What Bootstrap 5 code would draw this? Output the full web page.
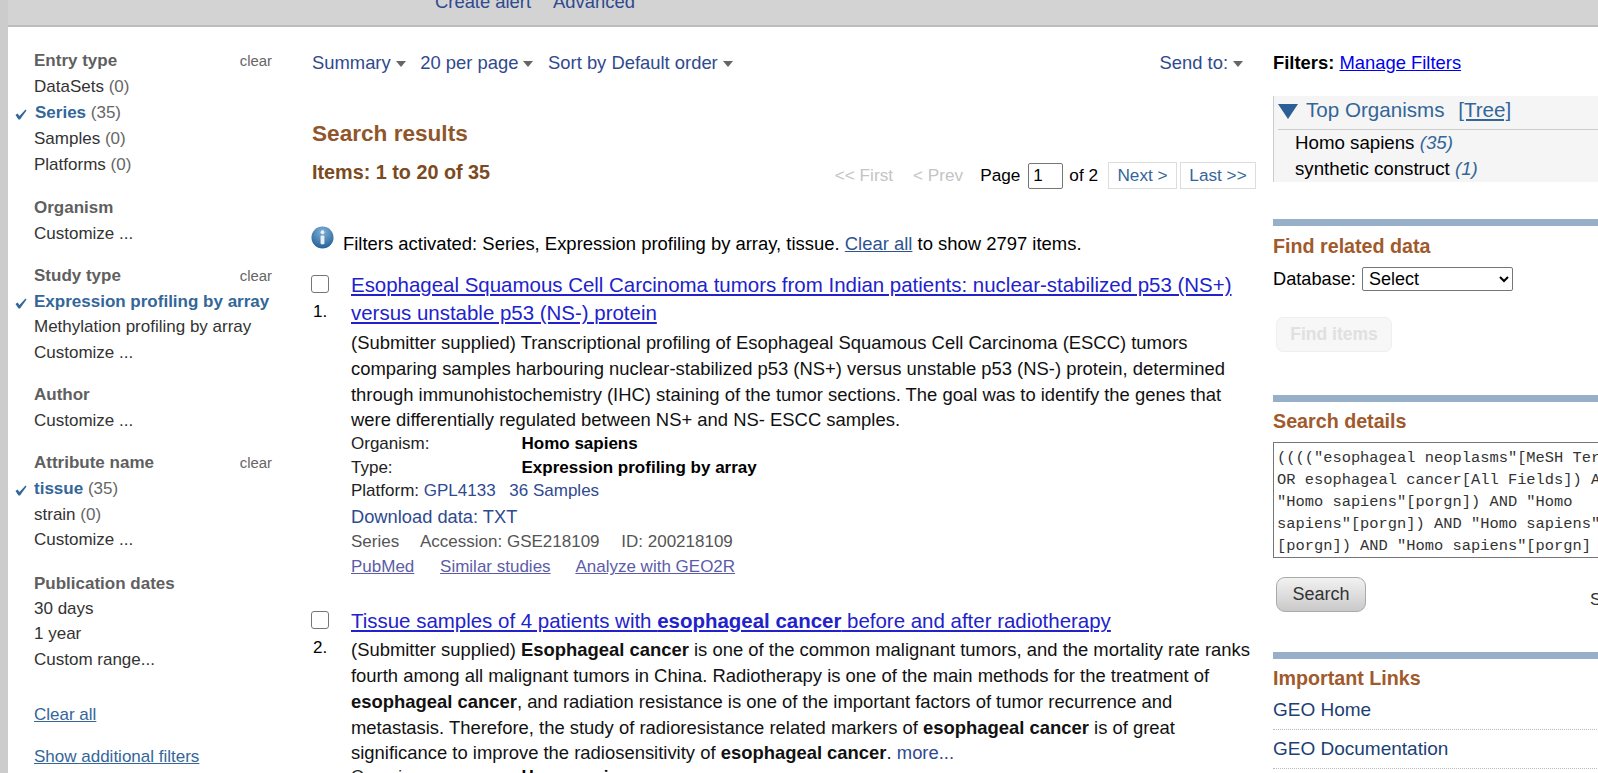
<!DOCTYPE html>
<html lang="en">
<head>
<meta charset="utf-8">
<title>GEO DataSets search results</title>
<link href="https://cdn.jsdelivr.net/npm/bootstrap@5.3.0/dist/css/bootstrap.min.css" rel="stylesheet">
<style>
html,body{height:773px;overflow:hidden;}
body{background:#ccc;font-family:"Liberation Sans",Arial,sans-serif;font-size:17px;color:#000;padding-left:8px;}
a{color:#2f4a8f;text-decoration:none;}
.top-strip{height:27px;background:#d3d3d3;border-bottom:2px solid #bdbdbd;overflow:hidden;}
.top-links{margin-left:427px;margin-top:-7px;gap:22px;font-size:18.4px;line-height:18px;}
.page-body{background:#fff;height:746px;width:1590px;overflow:hidden;}
.facets{width:296px;flex:none;padding:21px 0 0 26px;color:#333;font-size:17px;}
.facets-inner{width:238px;}
.facet-group{margin-bottom:17px;}
.facet-group-tall .facet-item{line-height:26px;}
.facet-group-mid .facet-item{line-height:25.7px;}
.facet-group-dates{margin-top:18px;margin-bottom:0;}
.facet-group-dates .facet-head{height:25px;}
.facet-head{color:#5f5f5f;font-weight:700;line-height:26px;height:26px;}
.facet-clear{font-weight:400;font-size:14.9px;color:#666;}
.facet-item{line-height:25.2px;position:relative;color:#333;}
.facet-item span{color:#666;}
.facet-item.on b{color:#336699;}
.facet-tick{position:absolute;left:-19px;top:9px;}
.facet-first{margin-left:1px;}
.facet-link{color:#336699;text-decoration:underline;line-height:26px;}
.facet-links-top{margin-top:30px;}
.center-col{width:945px;flex:none;padding-top:24px;margin-left:8px;}
.toolbar{font-size:18.4px;line-height:24px;color:#2f4a8f;}
.caret-mark{display:inline-block;border-left:5.5px solid transparent;border-right:5.5px solid transparent;border-top:6px solid #666;margin-left:5px;vertical-align:middle;}
.toolbar-left{gap:14.6px;}
.send-link{margin-right:14px;}
.results-title{color:#8f562b;font-size:22.6px;font-weight:700;line-height:26px;margin:0;padding-top:46px;}
.items-row{height:44px;align-items:flex-start;}
.items-count{color:#7b4a20;font-weight:700;font-size:19.8px;line-height:26px;margin-top:12px;}
.pager{font-size:17.2px;margin-top:15px;line-height:27px;height:27px;margin-right:1px;}
.pager-off{color:#c4c4c4;margin-right:20px;}
.pager-off-last{margin-right:17px;}
.pager-num{width:35px;height:26px;border:1px solid #767676;border-radius:2px;padding:0 4px;font-size:17px;margin:0 6px 0 8px;font-family:inherit;}
.pager-btn{border:1px solid #ddd;color:#336699;padding:0;text-align:center;height:27px;line-height:25px;margin-left:3px;}
.pager-next{margin-left:10px;width:69px;}
.pager-last{width:76px;}
.filter-note{margin-top:35px;height:45px;font-size:18.45px;line-height:20px;}
.filter-note a{text-decoration:underline;color:#2f5391;}
.filter-icon{flex:none;margin-left:-1px;margin-right:9px;}
.filter-text{margin-top:8px;}
.result-row{position:relative;padding-left:39px;}
.result-side{position:absolute;left:-1px;top:0;width:30px;}
.result-check{width:18px;height:18px;border:1px solid #767676;border-radius:3px;background:#fff;display:block;margin-top:4px;}
.result-num{display:block;font-size:17px;margin-top:9px;line-height:20px;padding-left:2px;}
.result-title{font-size:20.47px;line-height:28px;margin:0;}
.result-title a{color:#2222cc;text-decoration:underline;}
.result-desc{font-size:18.43px;line-height:25.8px;margin:3px 0 0;color:#111;}
.result-desc-tight{margin-top:2px;}
.result-desc a{color:#2f4a8f;}
.meta-first{margin-top:-1px;}
.meta-line{font-size:17px;line-height:24px;display:flex;}
.meta-key{width:170.5px;flex:none;color:#222;}
.meta-plat{font-size:17px;line-height:22px;color:#222;}
.meta-plat a{margin-right:9px;}
.meta-dl{font-size:18.3px;line-height:30px;display:block;margin-bottom:-2px;}
.meta-ids{font-size:17px;line-height:23px;color:#555;}
.meta-ids span{margin-right:17px;}
.meta-links{font-size:17px;line-height:25px;margin-top:1px;}
.meta-links a{color:#5c5ca8;text-decoration:underline;margin-right:21px;}
.result-gap{margin-top:28px;}
.side-col{flex:none;width:500px;padding-top:23px;margin-left:16px;}
.filters-line{font-size:18.4px;line-height:26px;}
.filters-line a{color:#0000ee;text-decoration:underline;}
.org-box{margin-top:20px;width:400px;background:#f5f5f5;border-left:1px solid #ccc;height:86px;padding-left:4px;}
.org-head{height:34px;border-bottom:1px solid #ccc;color:#336699;font-size:20.6px;line-height:28px;}
.org-head a{color:#336699;text-decoration:underline;margin-left:8px;}
.org-tri{margin-right:8px;vertical-align:-2px;}
.org-item{font-size:18.7px;line-height:26px;padding-left:17px;}
.org-item i{color:#336699;}
.sec-bar{height:7px;background:#97afc9;margin-top:37px;}
.sec-title{color:#a05a2c;font-size:19.7px;font-weight:700;line-height:26px;margin:7px 0 0;}
.db-line{font-size:18.2px;line-height:24px;margin-top:8px;}
.db-select{width:151px;height:24px;font-size:18px;border:1px solid #767676;border-radius:2px;background:#fff;padding:0 2px;font-family:inherit;margin-left:1px;}
.btn-find{display:block;margin:26px 0 43px 3px;height:35px;width:116px;font-size:17.5px;font-weight:700;color:#e0e0e0;background:#f7f7f7;border:1px solid #efefef;border-radius:7px;padding:0;}
.sec-bar-tight{margin-top:0;}
.sec-title-details{margin-top:6px;}
.query-box{display:block;width:400px;height:116px;margin-top:8px;font-family:"Liberation Mono",monospace;font-size:15.4px;line-height:22px;border:1px solid #767676;border-radius:0;padding:4px 0 0 3px;resize:none;overflow:hidden;white-space:pre;color:#333;}
.btn-search{display:block;width:90px;height:35px;border:1px solid #aaa;border-radius:9px;background:linear-gradient(#f2f2f2,#c9c9c9);color:#333;font-size:18px;padding:0;margin:0 0 0 3px;position:relative;top:19px;}
.search-row{position:relative;height:57px;}
.search-see{position:absolute;left:317px;top:33px;font-size:17px;line-height:18px;color:#333;}
.sec-title-links{margin-top:6px;}
.link-row{display:block;border-bottom:1px dotted #bbb;font-size:19px;line-height:38px;height:39px;color:#1c3f74;width:400px;}
</style>
</head>
<body>
<div class="top-strip"><div class="d-flex top-links"><a href="#">Create alert</a><a href="#">Advanced</a></div></div>
<div class="page-body d-flex">
  <aside class="facets">
    <div class="facets-inner">
      <div class="facet-group facet-group-tall">
        <div class="facet-head d-flex justify-content-between">Entry type <a href="#" class="facet-clear">clear</a></div>
        <div class="facet-item">DataSets <span>(0)</span></div>
        <div class="facet-item on"><svg class="facet-tick" width="12" height="11" viewBox="0 0 12 11"><path d="M0.5 6 L2.5 4.5 L4.5 7 L10.5 0.5 L11.5 1.5 L5 10.5 L3.5 10.5 Z" fill="#336699"/></svg><b class="facet-first">Series</b> <span>(35)</span></div>
        <div class="facet-item">Samples <span>(0)</span></div>
        <div class="facet-item">Platforms <span>(0)</span></div>
      </div>
      <div class="facet-group">
        <div class="facet-head">Organism</div>
        <div class="facet-item">Customize ...</div>
      </div>
      <div class="facet-group">
        <div class="facet-head d-flex justify-content-between">Study type <a href="#" class="facet-clear">clear</a></div>
        <div class="facet-item on"><svg class="facet-tick" width="12" height="11" viewBox="0 0 12 11"><path d="M0.5 6 L2.5 4.5 L4.5 7 L10.5 0.5 L11.5 1.5 L5 10.5 L3.5 10.5 Z" fill="#336699"/></svg><b>Expression profiling by array</b></div>
        <div class="facet-item">Methylation profiling by array</div>
        <div class="facet-item">Customize ...</div>
      </div>
      <div class="facet-group">
        <div class="facet-head">Author</div>
        <div class="facet-item">Customize ...</div>
      </div>
      <div class="facet-group facet-group-mid">
        <div class="facet-head d-flex justify-content-between">Attribute name <a href="#" class="facet-clear">clear</a></div>
        <div class="facet-item on"><svg class="facet-tick" width="12" height="11" viewBox="0 0 12 11"><path d="M0.5 6 L2.5 4.5 L4.5 7 L10.5 0.5 L11.5 1.5 L5 10.5 L3.5 10.5 Z" fill="#336699"/></svg><b>tissue</b> <span>(35)</span></div>
        <div class="facet-item">strain <span>(0)</span></div>
        <div class="facet-item">Customize ...</div>
      </div>
      <div class="facet-group facet-group-dates">
        <div class="facet-head">Publication dates</div>
        <div class="facet-item">30 days</div>
        <div class="facet-item">1 year</div>
        <div class="facet-item">Custom range...</div>
      </div>
      <div class="facet-links-top"><a href="#" class="facet-link">Clear all</a></div>
      <div class="mt-3"><a href="#" class="facet-link">Show additional filters</a></div>
    </div>
  </aside>
  <main class="center-col">
    <div class="toolbar d-flex justify-content-between">
      <div class="d-flex toolbar-left">
        <a href="#">Summary<i class="caret-mark"></i></a>
        <a href="#">20 per page<i class="caret-mark"></i></a>
        <a href="#">Sort by Default order<i class="caret-mark"></i></a>
      </div>
      <a href="#" class="send-link">Send to:<i class="caret-mark"></i></a>
    </div>
    <h2 class="results-title">Search results</h2>
    <div class="items-row d-flex justify-content-between">
      <div class="items-count">Items: 1 to 20 of 35</div>
      <div class="pager d-flex align-items-center">
        <span class="pager-off">&lt;&lt; First</span><span class="pager-off pager-off-last">&lt; Prev</span>
        <span>Page</span><input class="pager-num" value="1" aria-label="Page"><span>of 2</span>
        <a href="#" class="pager-btn pager-next">Next &gt;</a><a href="#" class="pager-btn pager-last">Last &gt;&gt;</a>
      </div>
    </div>
    <div class="filter-note d-flex">
      <svg class="filter-icon" width="23" height="23" viewBox="0 0 24 24"><defs><radialGradient id="ig" cx="50%" cy="25%" r="80%"><stop offset="0" stop-color="#7fb2d8"/><stop offset="1" stop-color="#1f5c94"/></radialGradient></defs><circle cx="12" cy="12" r="11.5" fill="url(#ig)"/><circle cx="12" cy="6.5" r="2" fill="#e8f0f7"/><rect x="10" y="10" width="4" height="9" rx="1" fill="#e8f0f7"/></svg>
      <div class="filter-text">Filters activated: Series, Expression profiling by array, tissue. <a href="#">Clear all</a> to show 2797 items.</div>
    </div>
    <article class="result-row">
      <div class="result-side"><span class="result-check"></span><span class="result-num">1.</span></div>
      <p class="result-title"><a href="#">Esophageal Squamous Cell Carcinoma tumors from Indian patients: nuclear-stabilized p53 (NS+) versus unstable p53 (NS-) protein</a></p>
      <p class="result-desc">(Submitter supplied) Transcriptional profiling of Esophageal Squamous Cell Carcinoma (ESCC) tumors comparing samples harbouring nuclear-stabilized p53 (NS+) versus unstable p53 (NS-) protein, determined through immunohistochemistry (IHC) staining of the tumor sections. The goal was to identify the genes that were differentially regulated between NS+ and NS- ESCC samples.</p>
      <div class="meta-line meta-first"><span class="meta-key">Organism:</span><b>Homo sapiens</b></div>
      <div class="meta-line"><span class="meta-key">Type:</span><b>Expression profiling by array</b></div>
      <div class="meta-plat">Platform: <a href="#">GPL4133</a> <a href="#">36 Samples</a></div>
      <a href="#" class="meta-dl">Download data: TXT</a>
      <div class="meta-ids"><span>Series</span> <span>Accession: GSE218109</span> <span>ID: 200218109</span></div>
      <div class="meta-links"><a href="#">PubMed</a> <a href="#">Similar studies</a> <a href="#">Analyze with GEO2R</a></div>
    </article>
    <article class="result-row result-gap">
      <div class="result-side"><span class="result-check"></span><span class="result-num">2.</span></div>
      <p class="result-title"><a href="#">Tissue samples of 4 patients with <b>esophageal cancer</b> before and after radiotherapy</a></p>
      <p class="result-desc result-desc-tight">(Submitter supplied) <b>Esophageal cancer</b> is one of the common malignant tumors, and the mortality rate ranks fourth among all malignant tumors in China. Radiotherapy is one of the main methods for the treatment of <b>esophageal cancer</b>, and radiation resistance is one of the important factors of tumor recurrence and metastasis. Therefore, the study of radioresistance related markers of <b>esophageal cancer</b> is of great significance to improve the radiosensitivity of <b>esophageal cancer</b>. <a href="#">more...</a></p>
      <div class="meta-line meta-first"><span class="meta-key">Organism:</span><b>Homo sapiens</b></div>
    </article>
  </main>
  <aside class="side-col">
    <div class="filters-line"><b>Filters:</b> <a href="#">Manage Filters</a></div>
    <div class="org-box">
      <div class="org-head"><svg class="org-tri" width="20" height="15" viewBox="0 0 20 15"><path d="M0 0H20L10 15Z" fill="#2c5f95"/></svg>Top Organisms <a href="#">[Tree]</a></div>
      <div class="org-item">Homo sapiens <i>(35)</i></div>
      <div class="org-item">synthetic construct <i>(1)</i></div>
    </div>
    <div class="sec-bar"></div>
    <h3 class="sec-title">Find related data</h3>
    <div class="db-line">Database: <select class="db-select" aria-label="Database"><option>Select</option></select></div>
    <button class="btn-find" type="button" disabled>Find items</button>
    <div class="sec-bar sec-bar-tight"></div>
    <h3 class="sec-title sec-title-details">Search details</h3>
    <textarea class="query-box" aria-label="Search details" readonly>((((&quot;esophageal neoplasms&quot;[MeSH Terms]
OR esophageal cancer[All Fields]) AND
&quot;Homo sapiens&quot;[porgn]) AND &quot;Homo
sapiens&quot;[porgn]) AND &quot;Homo sapiens&quot;
[porgn]) AND &quot;Homo sapiens&quot;[porgn]</textarea>
    <div class="search-row"><button class="btn-search" type="button">Search</button><span class="search-see">See more...</span></div>
    <div class="sec-bar"></div>
    <h3 class="sec-title sec-title-links">Important Links</h3>
    <a href="#" class="link-row">GEO Home</a>
    <a href="#" class="link-row">GEO Documentation</a>
  </aside>
</div>
<script src="https://cdn.jsdelivr.net/npm/bootstrap@5.3.0/dist/js/bootstrap.bundle.min.js"></script>
</body>
</html>
